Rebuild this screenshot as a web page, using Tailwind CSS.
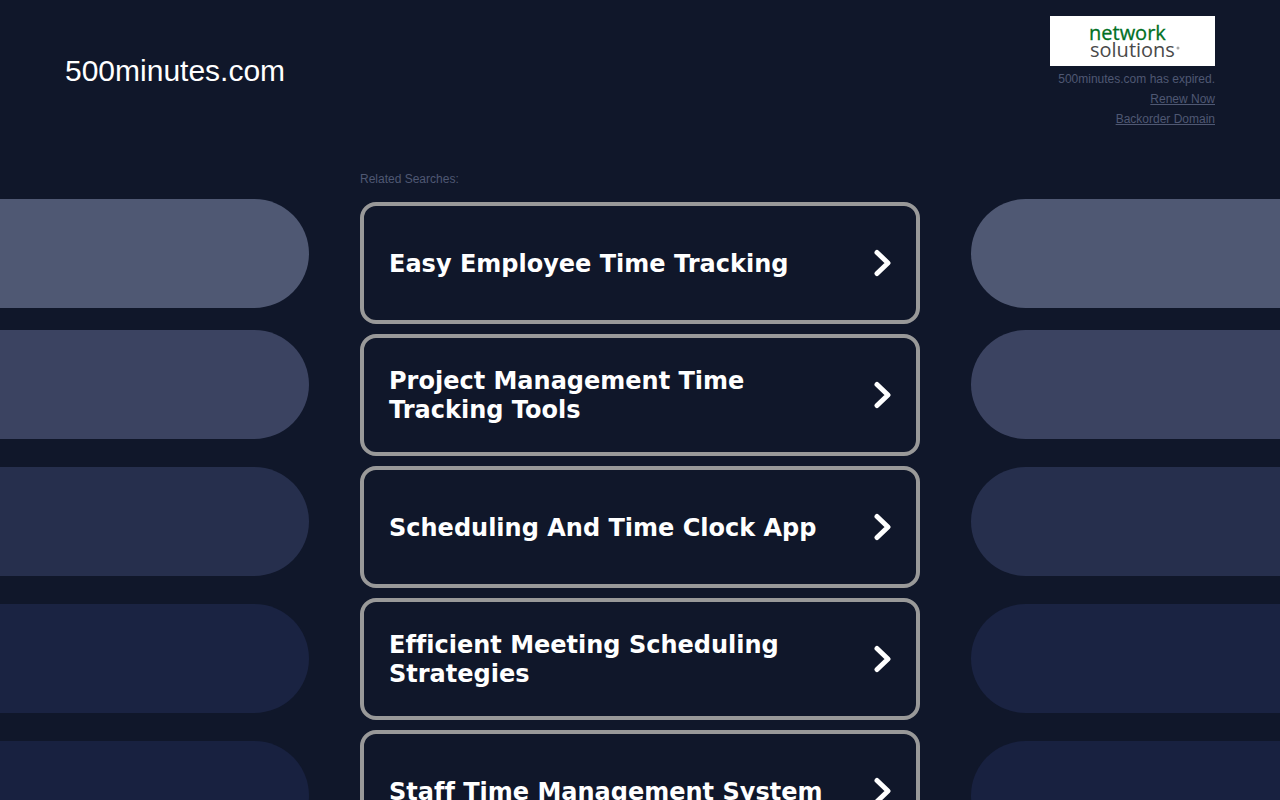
<!DOCTYPE html>
<html lang="en">
<head>
  <meta charset="UTF-8">
  <meta name="viewport" content="width=device-width, initial-scale=1">
  <title>500minutes.com</title>
  <script src="https://cdn.jsdelivr.net/npm/@tailwindcss/browser@4"></script>
</head>
<body class="relative h-screen overflow-hidden bg-[#10172a] font-['Liberation_Sans',Arial,sans-serif] text-white">

  <!-- Background pills -->
  <div class="absolute inset-0 grid grid-cols-[1fr_662px_1fr] overflow-hidden pt-[199px]" aria-hidden="true">
    <div class="flex flex-col gap-7">
      <div class="-mb-1.5 h-[109px] shrink-0 rounded-r-full bg-[#4f5873]"></div>
      <div class="h-[109px] shrink-0 rounded-r-full bg-[#3b4361]"></div>
      <div class="h-[109px] shrink-0 rounded-r-full bg-[#262f4d]"></div>
      <div class="h-[109px] shrink-0 rounded-r-full bg-[#1a2342]"></div>
      <div class="h-[109px] shrink-0 rounded-r-full bg-[#182140]"></div>
    </div>
    <div class="col-start-3 flex flex-col gap-7">
      <div class="-mb-1.5 h-[109px] shrink-0 rounded-l-full bg-[#4f5873]"></div>
      <div class="h-[109px] shrink-0 rounded-l-full bg-[#3b4361]"></div>
      <div class="h-[109px] shrink-0 rounded-l-full bg-[#262f4d]"></div>
      <div class="h-[109px] shrink-0 rounded-l-full bg-[#1a2342]"></div>
      <div class="h-[109px] shrink-0 rounded-l-full bg-[#182140]"></div>
    </div>
  </div>

  <div class="relative">
    <header class="mx-auto flex max-w-[1150px] items-center justify-between pt-4">
      <h1 class="pb-1 text-[30px] leading-9">500minutes.com</h1>
      <div class="flex flex-col items-end text-right text-xs leading-5 text-[#4f5873]">
        <div class="mb-[3px] flex h-[50px] w-[165px] items-center justify-center bg-white" role="img" aria-label="Network Solutions">
          <svg class="h-[50px] w-[165px]" viewBox="0 0 165 50" font-family="'Open Sans', sans-serif">
            <text x="39" y="24" font-size="20" fill="#00701f" stroke="#00701f" stroke-width="0.3">network</text>
            <text x="40" y="41" font-size="20" fill="#4a4a4a">solutions</text>
            <circle cx="128" cy="32" r="1.5" fill="#aaaaaa"/>
          </svg>
        </div>
        <p>500minutes.com has expired.</p>
        <a href="#" class="underline">Renew Now</a>
        <a href="#" class="underline">Backorder Domain</a>
      </div>
    </header>

    <main class="mx-auto mt-10 max-w-[560px]">
      <h2 class="mb-[13px] text-xs leading-5 text-[#4f5873]">Related Searches:</h2>
      <ul class="flex flex-col gap-2.5 font-['DejaVu_Sans',Verdana,sans-serif] text-2xl leading-[29px] font-bold [font-variant-ligatures:none]">
        <li>
          <a href="#" class="flex min-h-[122px] items-center justify-between rounded-2xl border-4 border-[#999999] pr-6 pl-[25px]">
            <span class="max-w-[450px] pt-0.5">Easy Employee Time Tracking</span>
            <svg class="h-7 w-5" viewBox="0 0 20 28" fill="none" stroke="currentColor" stroke-width="5" stroke-linecap="round" stroke-linejoin="round"><path d="M5 3.500l11 10.500L5 24.500"/></svg>
          </a>
        </li>
        <li>
          <a href="#" class="flex min-h-[122px] items-center justify-between rounded-2xl border-4 border-[#999999] pr-6 pl-[25px]">
            <span class="max-w-[450px] pt-0.5">Project Management Time Tracking Tools</span>
            <svg class="h-7 w-5" viewBox="0 0 20 28" fill="none" stroke="currentColor" stroke-width="5" stroke-linecap="round" stroke-linejoin="round"><path d="M5 3.500l11 10.500L5 24.500"/></svg>
          </a>
        </li>
        <li>
          <a href="#" class="flex min-h-[122px] items-center justify-between rounded-2xl border-4 border-[#999999] pr-6 pl-[25px]">
            <span class="max-w-[450px] pt-0.5">Scheduling And Time Clock App</span>
            <svg class="h-7 w-5" viewBox="0 0 20 28" fill="none" stroke="currentColor" stroke-width="5" stroke-linecap="round" stroke-linejoin="round"><path d="M5 3.500l11 10.500L5 24.500"/></svg>
          </a>
        </li>
        <li>
          <a href="#" class="flex min-h-[122px] items-center justify-between rounded-2xl border-4 border-[#999999] pr-6 pl-[25px]">
            <span class="max-w-[450px] pt-0.5">Efficient Meeting Scheduling Strategies</span>
            <svg class="h-7 w-5" viewBox="0 0 20 28" fill="none" stroke="currentColor" stroke-width="5" stroke-linecap="round" stroke-linejoin="round"><path d="M5 3.500l11 10.500L5 24.500"/></svg>
          </a>
        </li>
        <li>
          <a href="#" class="flex min-h-[122px] items-center justify-between rounded-2xl border-4 border-[#999999] pr-6 pl-[25px]">
            <span class="max-w-[450px] pt-0.5">Staff Time Management System</span>
            <svg class="h-7 w-5" viewBox="0 0 20 28" fill="none" stroke="currentColor" stroke-width="5" stroke-linecap="round" stroke-linejoin="round"><path d="M5 3.500l11 10.500L5 24.500"/></svg>
          </a>
        </li>
      </ul>
    </main>
  </div>

</body>
</html>
